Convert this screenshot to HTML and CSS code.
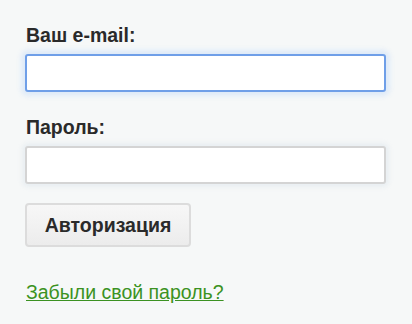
FILE: index.html
```html
<!DOCTYPE html>
<html lang="ru">
<head>
<meta charset="utf-8">
<link rel="stylesheet" href="styles.css">
</head>
<body>
<form class="login">
  <label class="label" for="email">Ваш e-mail:</label>
  <input class="field field-focus" id="email" type="text">
  <label class="label" for="pass">Пароль:</label>
  <input class="field" id="pass" type="password">
  <button class="btn" type="button">Авторизация</button>
  <a class="forgot" href="#">Забыли свой пароль?</a>
</form>
</body>
</html>
```

FILE: styles.css
```css
html, body {
  margin: 0;
  padding: 0;
  background: #f6f8f8;
}
body {
  font-family: "Liberation Sans", Arial, sans-serif;
  color: #2a2a2a;
}
.login {
  display: flex;
  flex-direction: column;
  align-items: flex-start;
  padding: 24px 0 0 25px;
  width: 361px;
}
.label {
  font-weight: bold;
  font-size: 19.5px;
  line-height: 22px;
  margin-left: 1px;
  margin-bottom: 8px;
}
.field {
  box-sizing: border-box;
  width: 361px;
  height: 38px;
  margin: 0 0 24px 0;
  background: #fff;
  border: 2px solid #d4d4d4;
  border-radius: 3px;
  outline: none;
  box-shadow: 0 0 4px 3px rgba(230, 236, 240, 0.8);
}
.field-focus {
  border-color: #6f9fe8;
  box-shadow: 0 0 5px 4px rgba(220, 233, 248, 0.9);
}
.btn {
  box-sizing: border-box;
  margin-top: -5px;
  width: 166px;
  height: 44px;
  font-family: "Liberation Sans", Arial, sans-serif;
  font-weight: bold;
  font-size: 19.5px;
  color: #2a2a2a;
  background: linear-gradient(#f7f7f7, #ececec);
  border: 2px solid #dcdcdc;
  border-radius: 4px;
  padding: 0;
}
.forgot {
  margin-top: 34px;
  margin-left: 1px;
  font-size: 19.5px;
  line-height: 22px;
  color: #3b9222;
  text-decoration: underline;
}
```
